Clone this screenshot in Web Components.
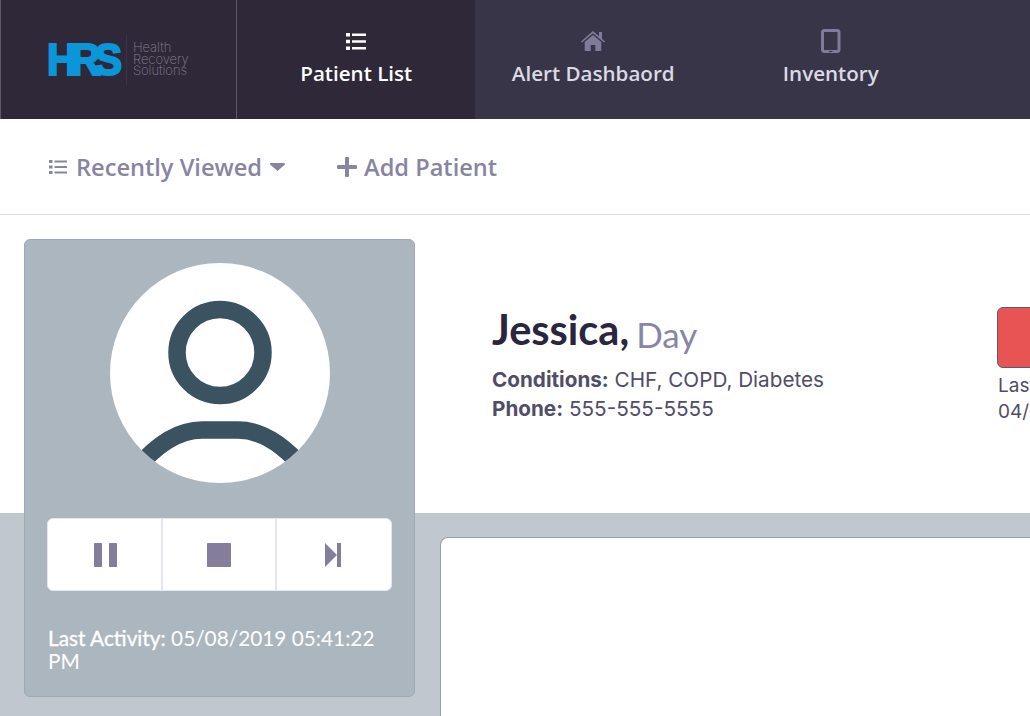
<!DOCTYPE html>
<html>
<head>
<meta charset="utf-8">
<title>Patient</title>
<style>
  html, body { margin: 0; height: 100%; overflow: hidden; background: #fff; }
  body { display: flex; flex-direction: column; font-family: "Open Sans", sans-serif; }
</style>
</head>
<body>
<hrs-nav>
  <nav-tab label="Patient List" active>
    <svg viewBox="0 0 20 17" width="20" height="17" fill="#fff"><path d="M0 0h4v3.400H0zM6 .4h14v2.600H6zM0 6.800h4v3.400H0zM6 7.200h14v2.600H6zM0 13.600h4V17H0zM6 14h14v2.600H6z"/></svg>
  </nav-tab>
  <nav-tab label="Alert Dashbaord">
    <svg viewBox="0 0 24 20" width="24" height="20" fill="#7f7b9a"><path d="M12 0 18 5.200V1h3v6.800l3 2.700-1 1.100L12 2.200 1 11.600l-1-1.100zM12 4l8.300 7.100V19a1 1 0 0 1-1 1h-5V14h-4.600v6h-5a1 1 0 0 1-1-1v-7.900z"/></svg>
  </nav-tab>
  <nav-tab label="Inventory">
    <svg viewBox="0 0 20 24" width="20" height="24" fill="none"><rect x="1.500" y="1.500" width="16.500" height="21" rx="2" stroke="#7f7b9a" stroke-width="3"/><path d="M8 22.500h3.500" stroke="#393548" stroke-width="1"/></svg>
  </nav-tab>
</hrs-nav>
<hrs-toolbar></hrs-toolbar>
<patient-page>
  <patient-card></patient-card>
  <patient-info></patient-info>
</patient-page>

<script>
class HrsNav extends HTMLElement {
  constructor() {
    super();
    this.attachShadow({ mode: 'open' }).innerHTML = `
      <style>
        :host { display: flex; flex: none; height: 119px; background: #393548; }
        .brand {
          flex: none; box-sizing: border-box; width: 237px;
          display: flex; align-items: center; padding-left: 47px;
          background: #2e2839;
          border-left: 1px solid #5d5a6c;
          border-right: 1px solid #5d5a6c;
        }
        .mark {
          font: 700 44px/34px "Liberation Sans", sans-serif;
          color: #0a96d8;
          -webkit-text-stroke: 2.200px #0a96d8;
          letter-spacing: -6.500px;
          width: 74px; height: 34px; margin-left: -1px;
          transform: scaleX(.94);
          transform-origin: left center;
        }
        .rule { width: 1px; height: 50px; background: #3b3647; margin: 0 6px 0 5px; }
        .words {
          font: 200 13px/11.600px Inter, sans-serif;
          color: #85828f; letter-spacing: -.05px;
        }
      </style>
      <div class="brand">
        <div class="mark">HRS</div>
        <div class="rule"></div>
        <div class="words">Health<br>Recovery<br>Solutions</div>
      </div>
      <slot></slot>`;
  }
}

class NavTab extends HTMLElement {
  constructor() {
    super();
    this.attachShadow({ mode: 'open' }).innerHTML = `
      <style>
        :host {
          display: flex; flex: none; width: 237.500px; box-sizing: border-box;
          flex-direction: column; align-items: center;
          padding-top: 29px;
          color: #d9dae4;
        }
        :host([active]) { background: #2e2839; color: #fff; padding-left: 1px; }
        .icon { height: 24px; display: flex; align-items: center; justify-content: center; }
        .label { font: 600 20.600px/29px "Open Sans", sans-serif; margin-top: 6px; }
      </style>
      <div class="icon"><slot></slot></div>
      <div class="label"></div>`;
    this.shadowRoot.querySelector('.label').textContent = this.getAttribute('label');
  }
}

class HrsToolbar extends HTMLElement {
  constructor() {
    super();
    this.attachShadow({ mode: 'open' }).innerHTML = `
      <style>
        :host {
          display: flex; flex: none; align-items: center; box-sizing: border-box;
          height: 96px; padding-left: 49px;
          border-bottom: 1px solid #dcdce6;
          color: #8785a2;
          font: 600 23.600px/32px "Open Sans", sans-serif;
        }
        .item { display: flex; align-items: center; }
        .list { margin-right: 9px; }
        .caret { margin-left: 8px; }
        .add { margin-left: 52px; }
        .plus { margin-right: 7px; }
      </style>
      <div class="item">
        <svg class="list" viewBox="0 0 18 14" width="18" height="14" fill="#8785a2"><path d="M0 0h3.500v3H0zM5.500.5H18v2H5.500zM0 5.500h3.500v3H0zM5.500 6H18v2H5.500zM0 11h3.500v3H0zM5.500 11.500H18v2H5.500z"/></svg>
        <span>Recently Viewed</span>
        <svg class="caret" viewBox="0 0 15 8" width="15" height="8" fill="#8785a2"><path d="M1 0h13a1 1 0 0 1 .7 1.700L7.500 8 .3 1.700A1 1 0 0 1 1 0z"/></svg>
      </div>
      <div class="item add">
        <svg class="plus" viewBox="0 0 20 20" width="20" height="20" fill="#8785a2"><path d="M8 1a1 1 0 0 1 1-1h2a1 1 0 0 1 1 1v7h7a1 1 0 0 1 1 1v2a1 1 0 0 1-1 1h-7v7a1 1 0 0 1-1 1H9a1 1 0 0 1-1-1v-7H1a1 1 0 0 1-1-1V9a1 1 0 0 1 1-1h7z"/></svg>
        <span>Add Patient</span>
      </div>`;
  }
}

class PatientPage extends HTMLElement {
  constructor() {
    super();
    this.attachShadow({ mode: 'open' }).innerHTML = `
      <style>
        :host {
          display: grid; flex: 1; min-height: 0;
          grid-template-columns: 440px 1fr;
          grid-template-rows: 298px 24px 1fr;
          background: #c0c7ce;
        }
        .band { grid-column: 1 / -1; grid-row: 1; background: #fff; }
        .panel {
          grid-column: 2; grid-row: 3;
          background: #fff;
          border-left: 1px solid #95a0ad;
          border-top: 1px solid #95a0ad;
          border-top-left-radius: 8px;
        }
        ::slotted(patient-card) { grid-column: 1; grid-row: 1 / -1; }
        ::slotted(patient-info) { grid-column: 2; grid-row: 1; }
      </style>
      <div class="band"></div>
      <div class="panel"></div>
      <slot></slot>`;
  }
}

class PatientCard extends HTMLElement {
  constructor() {
    super();
    this.attachShadow({ mode: 'open' }).innerHTML = `
      <style>
        :host {
          display: flex; flex-direction: column; box-sizing: border-box;
          width: 391px; height: 458px; margin: 24px 0 0 24px;
          padding: 23px 22px 0 22px;
          background: #acb6bf;
          border: 1px solid #9fa8b6;
          border-radius: 6px;
          color: #fff;
        }
        .avatar { display: block; margin: 0 auto; }
        .controls {
          display: flex; height: 73px; margin-top: 35px; box-sizing: border-box;
          background: #fff; border: 1px solid #e6e6f0; border-radius: 6px;
        }
        .controls div {
          flex: 1; display: flex; align-items: center; justify-content: center;
          border-left: 2px solid #e6e6f0;
        }
        .controls div:first-child { border-left: 0; padding-left: 1px; }
        .controls div:last-child { padding-right: 2px; }
        .activity {
          margin: 35px 0 0 1px;
          font: 400 20.800px/23px Lato, sans-serif;
        }
        .activity b { font-weight: 400; -webkit-text-stroke: .35px #fff; }
      </style>
      <svg class="avatar" viewBox="0 0 220 220" width="220" height="220">
        <defs><clipPath id="c"><circle cx="110" cy="110" r="110"/></clipPath></defs>
        <circle cx="110" cy="110" r="110" fill="#fff"/>
        <g fill="none" stroke="#3b5361" stroke-width="17.500" clip-path="url(#c)">
          <circle cx="110" cy="89.500" r="43"/>
          <path d="M26 206C47 181 68 167 92 167h36C152 167 173 181 194 206"/>
        </g>
      </svg>
      <div class="controls">
        <div><svg viewBox="0 0 23 24" width="23" height="24" fill="#847e9c"><rect width="8" height="24" rx=".8"/><rect x="15" width="8" height="24" rx=".8"/></svg></div>
        <div><svg viewBox="0 0 24 24" width="24" height="24" fill="#847e9c"><rect width="24" height="24" rx=".8"/></svg></div>
        <div><svg viewBox="0 0 16 24" width="16" height="24" fill="#847e9c"><path d="M0 0l12 12L0 24z"/><rect x="12" width="4" height="24"/></svg></div>
      </div>
      <div class="activity"><b>Last Activity:</b> <span>05/08/2019 05:41:22</span> <span>PM</span></div>`;
  }
}

class PatientInfo extends HTMLElement {
  constructor() {
    super();
    this.attachShadow({ mode: 'open' }).innerHTML = `
      <style>
        :host {
          display: flex; align-items: flex-start; overflow: hidden;
          padding: 92px 0 0 52px;
          font: 400 20.700px/29px Inter, sans-serif;
          color: #4f4d67;
        }
        .who { flex: none; width: 505px; }
        h1 {
          margin: 0 0 8px; font: 700 41.500px/45px Lato, sans-serif; color: #2a2640;
        }
        h1 span {
          font-weight: 400; font-size: 35px; color: #8785a8;
          margin-left: -3px; vertical-align: -3px;
        }
        b { font-weight: 700; }
        .alert { flex: none; width: 160px; font-size: 19px; line-height: 26px; }
        .alert div:last-child { padding-left: 1px; }
        .flag {
          box-sizing: border-box; height: 61px; margin-bottom: 5px;
          background: #e85454; border: 1px solid #5b5a78; border-radius: 6px;
        }
      </style>
      <div class="who">
        <h1>Jessica, <span>Day</span></h1>
        <div><b>Conditions:</b> CHF, COPD, Diabetes</div>
        <div><b>Phone:</b> 555-555-5555</div>
      </div>
      <div class="alert">
        <div class="flag"></div>
        <div>Last Alert:<br>04/08/2019</div>
      </div>`;
  }
}

customElements.define('hrs-nav', HrsNav);
customElements.define('nav-tab', NavTab);
customElements.define('hrs-toolbar', HrsToolbar);
customElements.define('patient-page', PatientPage);
customElements.define('patient-card', PatientCard);
customElements.define('patient-info', PatientInfo);
</script>
</body>
</html>
